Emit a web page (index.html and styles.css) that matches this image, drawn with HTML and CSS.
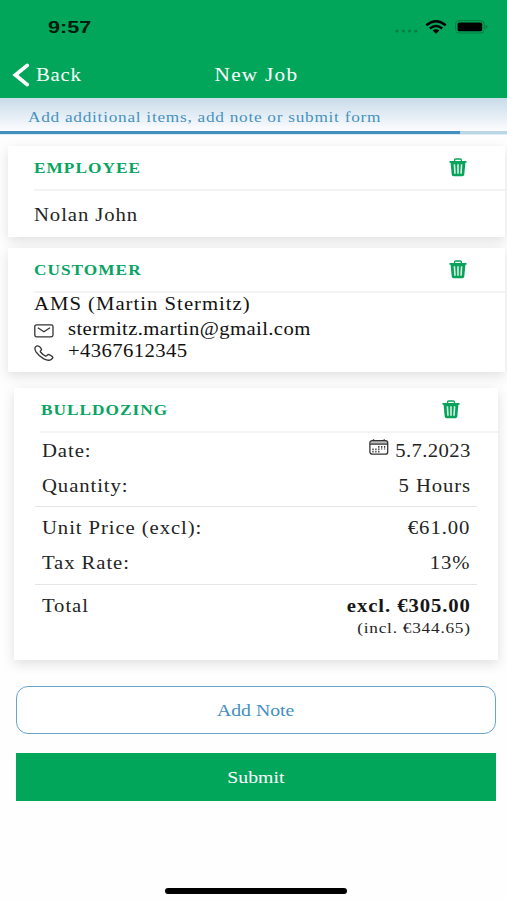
FILE: index.html
```html
<!DOCTYPE html>
<html lang="en">
<head>
<meta charset="utf-8">
<title>New Job</title>
<link rel="stylesheet" href="styles.css">
</head>
<body>
<svg width="0" height="0" class="defs">
  <symbol id="trash" viewBox="0 0 18 19">
    <path d="M5.6 4V2.2Q5.6 1 6.8 1H11.2Q12.4 1 12.4 2.2V4" fill="none" stroke="currentColor" stroke-width="1.3"/>
    <path d="M.5 3H17.5V4.8H16.4L15.3 16.4Q15.1 18.2 13.4 18.2H4.6Q2.9 18.2 2.7 16.4L1.6 4.8H.5Z" fill="currentColor"/>
    <path d="M5.4 6.2L6 15.8M9 6.2V15.8M12.6 6.2L12 15.8" fill="none" stroke="#d4f3e2" stroke-width="1.6"/>
  </symbol>
</svg>
<header class="header">
  <div class="status">
    <span class="clock">9:57</span>
    <div class="indicators">
      <svg class="dots" width="23" height="4" viewBox="0 0 23 4"><g fill="#078044"><circle cx="2" cy="2" r="1.6"/><circle cx="8.3" cy="2" r="1.6"/><circle cx="14.6" cy="2" r="1.6"/><circle cx="20.9" cy="2" r="1.6"/></g></svg>
      <svg class="wifi" width="22" height="14" viewBox="0 0 22 14"><g fill="none" stroke="#000" stroke-width="2.4"><path d="M1.3 5.3Q11-2.7 20.7 5.3"/><path d="M4.8 8.5Q11 3.3 17.2 8.5"/></g><path d="M7.6 10.6Q11 7.9 14.4 10.6L11 13.8Z"/></svg>
      <svg width="33" height="14" viewBox="0 0 33 14"><rect x=".6" y=".6" width="28.6" height="12.4" rx="3.4" fill="none" stroke="#067a40"/><rect x="2.6" y="2.5" width="24.6" height="8.8" rx="1.6"/><path d="M30.6 4.7Q32.4 5.2 32.4 6.8T30.6 8.9Z" fill="#067a40"/></svg>
    </div>
  </div>
  <nav class="nav">
    <a class="back"><svg width="17" height="24" viewBox="0 0 17 24"><path d="M15.2 2.4L3.4 12L15.2 21.6" fill="none" stroke="#fff" stroke-width="3.8" stroke-linecap="round"/></svg><span class="t back-t">Back</span></a>
    <h1 class="t title">New Job</h1>
  </nav>
</header>
<div class="banner"><span class="t hint">Add additional items, add note or submit form</span></div>
<div class="progress"><div class="progress-fill"></div></div>
<main>
  <section class="card employee">
    <div class="card-head"><h2 class="t">EMPLOYEE</h2><svg class="trash"><use href="#trash"/></svg></div>
    <p class="person"><span class="t">Nolan John</span></p>
  </section>
  <section class="card customer">
    <div class="card-head"><h2 class="t">CUSTOMER</h2><svg class="trash"><use href="#trash"/></svg></div>
    <p class="company"><span class="t ams">AMS (Martin Stermitz)</span></p>
    <p class="contact"><svg width="20" height="14" viewBox="0 0 20 14"><rect x=".8" y=".8" width="18.2" height="12" rx="1.8"/><path d="M3.8 3.7L9.9 7.8L16 3.7"/></svg><span class="t tight">stermitz.martin@gmail.com</span></p>
    <p class="contact phone-row"><svg width="20" height="16" viewBox="0 0 20 16"><path d="M4 .9Q2.8.6 1.5 1.9Q0 3.5 2.2 7.1Q5 11.2 9.8 13.9Q14.7 16.3 17.2 14.4Q19.3 13 18.7 12Q17.6 10.5 15.2 9.6Q14.2 9.2 13 10.4Q12 11.3 11 10.8Q8.6 9.5 6.5 7Q5.9 6.2 6.9 5.4Q7.9 4.7 7.2 3.7Q5.8 1.3 4 .9Z"/></svg><span class="t tight">+4367612345</span></p>
  </section>
  <section class="card job">
    <div class="card-head"><h2 class="t">BULLDOZING</h2><svg class="trash"><use href="#trash"/></svg></div>
    <div class="group first">
      <div class="row"><span class="t">Date:</span><span class="value"><svg class="cal" width="20" height="17" viewBox="0 0 20 17"><path d="M2 1.7H18V5H2Z" fill="#bbb" stroke="none"/><rect x=".9" y="1.6" width="17.8" height="13.6" rx="2.2"/><path d="M1 5.2H18.6M4.5.3V2M15.2.3V2"/><path d="M4 9.4V13.4M6.9 9.4V13.4M9.8 7V13.4M12.7 7V10.6M15.6 7V10.6" stroke-dasharray="1.8 .7"/></svg><span class="t r date-v">5.7.2023</span></span></div>
      <div class="row"><span class="t">Quantity:</span><span class="t r">5 Hours</span></div>
    </div>
    <div class="group">
      <div class="row"><span class="t">Unit Price (excl):</span><span class="t r">€61.00</span></div>
      <div class="row"><span class="t">Tax Rate:</span><span class="t r">13%</span></div>
    </div>
    <div class="group">
      <div class="row total"><span class="t">Total</span><strong class="t r">excl. €305.00</strong></div>
      <div class="incl"><span class="t r incl-v">(incl. €344.65)</span></div>
    </div>
  </section>
  <button class="btn note"><span class="t c">Add Note</span></button>
  <button class="btn submit"><span class="t c">Submit</span></button>
</main>
<div class="home"></div>
</body>
</html>
```
FILE: styles.css
```css
* { box-sizing: border-box; }
body {
  margin: 0;
  width: 507px;
  height: 900px;
  overflow: hidden;
  display: flex;
  flex-direction: column;
  background: #fefefe;
  color: #242424;
  font: 18px/24px "Liberation Serif", serif;
}
h1, h2, p { margin: 0; font-weight: 400; }
.defs { position: absolute; }

/* wide-set lettering */
.t {
  display: inline-block;
  white-space: nowrap;
  letter-spacing: .8px;
  transform: scaleX(1.15);
  transform-origin: left center;
}
.r { transform-origin: right center; margin-right: -.8px; }
.c { transform-origin: center; }

.header { height: 98px; background: #02a65a; color: #fff; }
.status { height: 54px; display: flex; justify-content: space-between; padding: 0 19px 0 48px; }
.clock {
  font: bold 17px/55px "Liberation Sans", sans-serif;
  color: #001c0c;
  transform: scaleX(1.27);
  transform-origin: left center;
}
.indicators { display: flex; align-items: center; gap: 8px; }
.dots { margin: 8px -1px 0 0; }
.nav { height: 42px; display: grid; grid-template-columns: 1fr auto 1fr; align-items: center; }
.back { display: flex; align-items: center; padding-left: 12px; gap: 7px; }
.back-t { letter-spacing: .65px; }
.title { font-size: 18.5px; letter-spacing: 1.1px; transform-origin: center; margin-left: 5px; }

.banner { height: 33px; padding-left: 28px; background: linear-gradient(#c8dbe9, #fdfdff); color: #4692c0; }
.hint { font-size: 15px; line-height: 38px; letter-spacing: .64px; }
.progress { height: 4px; background: #bbd7e5; border-bottom: 1px solid #dcecf4; }
.progress-fill { width: 460px; height: 3px; background: #438fbe; }

main { display: flex; flex-direction: column; padding-top: 11px; }
.card { background: #fff; box-shadow: 0 4px 12px rgba(0, 0, 0, .12); margin: 0 2px 0 8px; padding-left: 26px; }
.card-head { display: flex; justify-content: space-between; align-items: center; height: 45px; padding: 1px 38px 0 0; border-bottom: 2px solid #f3f3f3; }
h2.t { font-size: 15px; font-weight: 700; color: #08a462; letter-spacing: .9px; }
.trash { width: 18px; height: 19px; color: #08a25a; margin-top: -1px; }

.employee { height: 91px; }
.person { line-height: 48px; }
.customer { height: 124px; margin-top: 11px; color: #111; }
.company { height: 24px; line-height: 22px; }
.ams { letter-spacing: .88px; }
.contact { display: flex; align-items: center; height: 24px; line-height: 24px; gap: 14px; }
.contact svg, .cal { fill: none; stroke: #333; stroke-width: 1.3; stroke-linejoin: round; }
.contact svg { margin-top: 3px; }
.tight { letter-spacing: .34px; }
.phone-row { height: 20px; }

.job { height: 272px; margin: 16px 9px 0 14px; }
.group { margin: 0 21px 0 -5px; padding: 3px 7px 0; height: 78px; border-top: 1px solid #e5e5e5; }
.job h2 { margin-left: .7px; }
.group.first { height: 73px; padding-top: 0; border-top: 0; }
.group.first .row { height: 35.5px; }
.row { display: flex; justify-content: space-between; align-items: center; height: 35.5px; }
.value { display: flex; align-items: center; gap: 16px; }
.cal { margin-top: -6px; }
.date-v { letter-spacing: .35px; margin-right: -.35px; }
.value { gap: 15.5px; }
.total strong { color: #171717; }
.total { height: 36px; }
.incl { display: flex; justify-content: flex-end; height: 20px; margin-top: -6px; line-height: 20px; }
.incl-v { font-size: 15px; letter-spacing: .67px; }

.btn { display: block; margin: 26px 11px 0 16px; height: 48px; padding: 0; border: 0; font: 17.2px/47px "Liberation Serif", serif; }
.note { border: 1.5px solid #67a4ce; border-radius: 12px; background: #fff; color: #448fc0; }
.submit { margin-top: 19px; background: #02a65a; color: #fff; line-height: 49px; }
.note .t, .submit .t { letter-spacing: 0; }
.home { width: 182px; height: 6px; margin: auto auto 6px 165px; border-radius: 3px; background: #000; }
```
